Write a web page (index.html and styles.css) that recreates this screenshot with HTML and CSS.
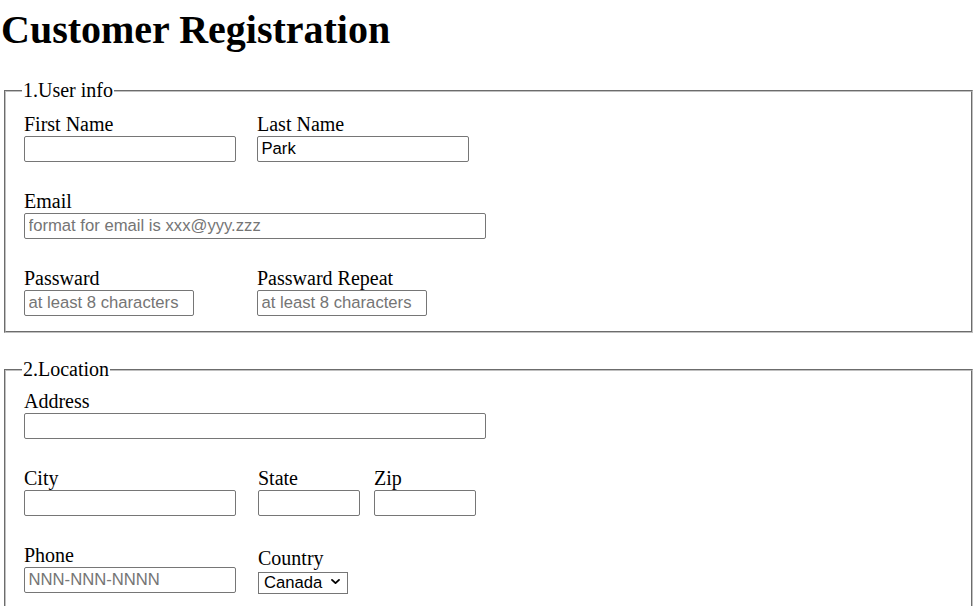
FILE: index.html
```html
<!DOCTYPE html>
<html lang="en">
<head>
<meta charset="utf-8">
<title>Customer Registration</title>
<link rel="stylesheet" href="styles.css">
</head>
<body>
<h1 class="title">Customer Registration</h1>
<form class="form">
  <fieldset class="group group-first">
    <legend class="group-legend">1.User info</legend>
    <div class="group-body">
      <div class="row">
        <div class="field">
          <label class="label" for="fn">First Name</label>
          <input class="input w-md" id="fn" type="text">
        </div>
        <div class="field">
          <label class="label" for="ln">Last Name</label>
          <input class="input w-md" id="ln" type="text" value="Park">
        </div>
      </div>
      <div class="row">
        <div class="field">
          <label class="label" for="em">Email</label>
          <input class="input w-lg" id="em" type="email" placeholder="format for email is xxx@yyy.zzz">
        </div>
      </div>
      <div class="row">
        <div class="field field-fixed">
          <label class="label" for="pw">Passward</label>
          <input class="input w-sm" id="pw" type="password" placeholder="at least 8 characters">
        </div>
        <div class="field">
          <label class="label" for="pw2">Passward Repeat</label>
          <input class="input w-sm" id="pw2" type="password" placeholder="at least 8 characters">
        </div>
      </div>
    </div>
  </fieldset>

  <fieldset class="group">
    <legend class="group-legend">2.Location</legend>
    <div class="group-body">
      <div class="row">
        <div class="field">
          <label class="label" for="ad">Address</label>
          <input class="input w-lg" id="ad" type="text">
        </div>
      </div>
      <div class="row row-wide">
        <div class="field">
          <label class="label" for="ci">City</label>
          <input class="input w-md" id="ci" type="text">
        </div>
        <div class="subrow">
          <div class="field">
            <label class="label" for="st">State</label>
            <input class="input w-xs" id="st" type="text">
          </div>
          <div class="field">
            <label class="label" for="zp">Zip</label>
            <input class="input w-xs" id="zp" type="text">
          </div>
        </div>
      </div>
      <div class="row row-wide">
        <div class="field">
          <label class="label" for="ph">Phone</label>
          <input class="input w-md" id="ph" type="tel" placeholder="NNN-NNN-NNNN">
        </div>
        <div class="field field-country">
          <label class="label" for="co">Country</label>
          <div class="select-wrap">
            <select class="select" id="co">
              <option>Canada</option>
              <option>USA</option>
            </select>
            <svg class="chev" viewBox="0 0 9 5" aria-hidden="true"><path d="M1 0.9 L4.5 4.1 L8 0.9" fill="none" stroke="#000" stroke-width="1.9" stroke-linecap="round" stroke-linejoin="round"/></svg>
          </div>
        </div>
      </div>
    </div>
  </fieldset>
</form>
</body>
</html>
```
FILE: styles.css
```css
html, body {
  background: #fff;
}

body {
  margin: 0 4px 0 2px;
  font-family: "Liberation Serif", "Times New Roman", serif;
  font-size: 20px;
  color: #000;
}

.title {
  font-size: 40px;
  font-weight: bold;
  line-height: 44px;
  margin: 8px 0 27px -1px;
}

.form {
  display: flex;
  flex-direction: column;
  gap: 25px;
  margin: 0;
}

.group {
  margin: 0 2px;
  padding: 8.5px 16px 15.5px 16px;
  border: 2px groove #c0c0c0;
  min-width: 0;
}

.group-first {
  padding-top: 10.5px;
}

.group-legend {
  padding: 0 1px;
  font-size: 20px;
  line-height: 23px;
}

.group-body {
  display: flex;
  flex-direction: column;
  gap: 28px;
  padding-left: 2px;
}

.row {
  display: flex;
  align-items: flex-start;
  gap: 21px;
}

.row-wide {
  gap: 22px;
}

.subrow {
  display: flex;
  gap: 14px;
}

.field {
  display: flex;
  flex-direction: column;
  gap: 0.5px;
}

.field-fixed {
  width: 212px;
}

.field-country {
  padding-top: 3px;
}

.label {
  display: block;
  line-height: 23px;
}

.input {
  box-sizing: border-box;
  height: 25.5px;
  margin: 0;
  padding: 0 3.5px;
  border: 1px solid #767676;
  border-radius: 2px;
  background: #fff;
  color: #000;
  font-family: "Liberation Sans", Arial, sans-serif;
  font-size: 16.67px;
  outline: none;
}

.input::placeholder {
  color: #757575;
  opacity: 1;
}

.w-lg { width: 462px; }
.w-md { width: 212px; }
.w-sm { width: 170px; }
.w-xs { width: 102px; }

.select-wrap {
  position: relative;
  width: 90px;
  height: 22px;
}

.select {
  -webkit-appearance: none;
  appearance: none;
  box-sizing: border-box;
  width: 90px;
  height: 22px;
  margin: 0;
  padding: 0 0 0 5px;
  border: 1px solid #767676;
  border-radius: 0;
  background: #fff;
  color: #000;
  font-family: "Liberation Sans", Arial, sans-serif;
  font-size: 16.67px;
  outline: none;
}

.chev {
  position: absolute;
  right: 8px;
  top: 8.5px;
  width: 9px;
  height: 5px;
  overflow: visible;
  pointer-events: none;
}
```
